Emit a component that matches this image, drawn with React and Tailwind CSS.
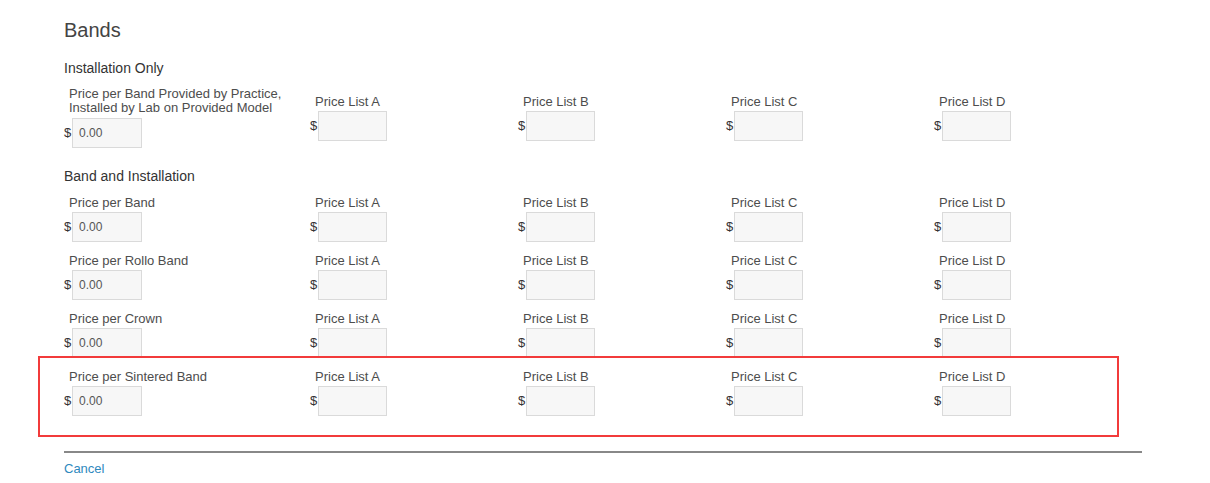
import React from "react";

const lists = ["Price List A", "Price List B", "Price List C", "Price List D"];

function Field({ label, value, twoLine }) {
  return (
    <div className="flex flex-col">
      <div
        className={
          twoLine
            ? "pl-[5px] text-[13px] leading-[14px] text-[#4d4d4d] whitespace-nowrap"
            : "pl-[5px] text-[13px] leading-[16px] h-[16px] text-[#4d4d4d] whitespace-nowrap"
        }
      >
        {label}
      </div>
      <div className={twoLine ? "mt-[3px] flex items-center" : "mt-[1px] flex items-center"}>
        <span className="text-[13px] leading-[16px] text-[#333] w-[8px]">$</span>
        <input
          defaultValue={value}
          className="w-[70px] h-[30px] border border-[#dadada] bg-[#f7f7f7] px-[6px] text-[12px] text-[#555] outline-none font-['Liberation_Sans',Arial,sans-serif]"
        />
      </div>
    </div>
  );
}

function ListField({ label }) {
  return (
    <div className="flex flex-col">
      <div className="pl-[5px] text-[13px] leading-[16px] h-[16px] text-[#4d4d4d] whitespace-nowrap">
        {label}
      </div>
      <div className="mt-[1px] flex items-center">
        <span className="text-[13px] leading-[16px] text-[#333] w-[8px]">$</span>
        <input
          defaultValue=""
          className="w-[69px] h-[30px] border border-[#dadada] bg-[#f7f7f7] px-[6px] text-[12px] text-[#555] outline-none"
        />
      </div>
    </div>
  );
}

function Row({ label, twoLine, className }) {
  return (
    <div className={"grid grid-cols-[246px_208px_208px_208px_208px] items-center " + (className || "")}>
      <Field label={label} value="0.00" twoLine={twoLine} />
      {lists.map((l) => (
        <ListField key={l} label={l} />
      ))}
    </div>
  );
}

export default function App() {
  return (
    <div className="relative w-[1210px] h-[483px] bg-white overflow-hidden font-['Liberation_Sans',Arial,sans-serif] pl-[64px] pt-[18px]">
      <h2 className="text-[20px] leading-[24px] text-[#444]">Bands</h2>
      <h3 className="mt-[18px] text-[14px] leading-[16px] text-[#333]">Installation Only</h3>
      <Row
        className="mt-[11px]"
        twoLine
        label={
          <>
            Price per Band Provided by Practice,
            <br />
            Installed by Lab on Provided Model
          </>
        }
      />
      <h3 className="mt-[20px] text-[14px] leading-[16px] text-[#333]">Band and Installation</h3>
      <Row className="mt-[11px]" label="Price per Band" />
      <Row className="mt-[11px]" label="Price per Rollo Band" />
      <Row className="mt-[11px]" label="Price per Crown" />
      <Row className="mt-[11px]" label="Price per Sintered Band" />
      <div className="mt-[35px] h-[2px] w-[1078px] bg-[#888]" />
      <div className="mt-[8px] text-[13px] leading-[16px]">
        <a href="#" className="text-[13px] leading-[16px] text-[#2f89be]">
          Cancel
        </a>
      </div>
      <div className="pointer-events-none absolute left-[38px] top-[356px] w-[1081px] h-[81px] border-2 border-[#f23b3b]" />
    </div>
  );
}
